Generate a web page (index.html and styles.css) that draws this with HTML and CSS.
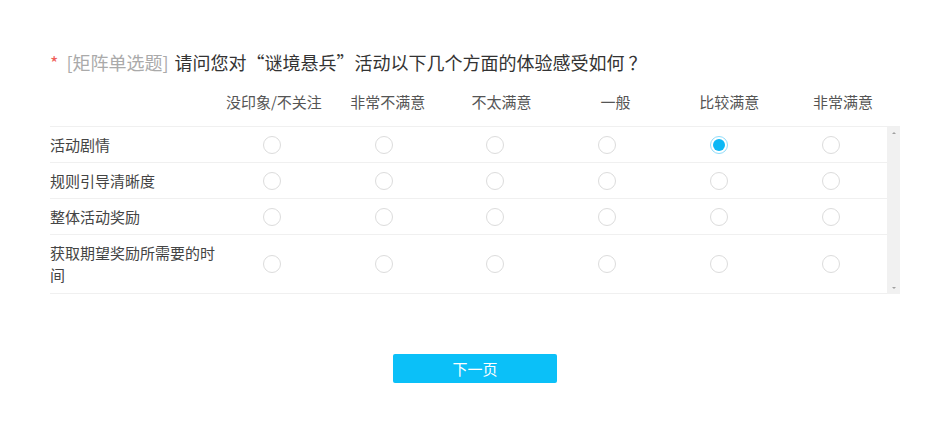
FILE: index.html
```html
<!DOCTYPE html>
<html lang="zh-CN">
<head>
<meta charset="utf-8">
<title>矩阵单选题</title>
<link rel="stylesheet" href="styles.css">
</head>
<body>
<div class="page">
  <div class="question">
    <div class="title">
      <span class="req">*</span>
      <span class="type">[矩阵单选题]</span>
      <span class="text">请问您对“谜境悬兵”活动以下几个方面的体验感受如何 ？</span>
    </div>
    <div class="matrix">
      <div class="head">
        <div class="label"></div>
        <div class="col">没印象/不关注</div>
        <div class="col">非常不满意</div>
        <div class="col">不太满意</div>
        <div class="col">一般</div>
        <div class="col">比较满意</div>
        <div class="col">非常满意</div>
      </div>
      <div class="body">
        <div class="rows">
          <div class="row">
            <div class="label">活动剧情</div>
            <div class="col"><span class="radio"></span></div>
            <div class="col"><span class="radio"></span></div>
            <div class="col"><span class="radio"></span></div>
            <div class="col"><span class="radio"></span></div>
            <div class="col"><span class="radio checked"></span></div>
            <div class="col"><span class="radio"></span></div>
          </div>
          <div class="row">
            <div class="label">规则引导清晰度</div>
            <div class="col"><span class="radio"></span></div>
            <div class="col"><span class="radio"></span></div>
            <div class="col"><span class="radio"></span></div>
            <div class="col"><span class="radio"></span></div>
            <div class="col"><span class="radio"></span></div>
            <div class="col"><span class="radio"></span></div>
          </div>
          <div class="row">
            <div class="label">整体活动奖励</div>
            <div class="col"><span class="radio"></span></div>
            <div class="col"><span class="radio"></span></div>
            <div class="col"><span class="radio"></span></div>
            <div class="col"><span class="radio"></span></div>
            <div class="col"><span class="radio"></span></div>
            <div class="col"><span class="radio"></span></div>
          </div>
          <div class="row">
            <div class="label">获取期望奖励所需要的时间</div>
            <div class="col"><span class="radio"></span></div>
            <div class="col"><span class="radio"></span></div>
            <div class="col"><span class="radio"></span></div>
            <div class="col"><span class="radio"></span></div>
            <div class="col"><span class="radio"></span></div>
            <div class="col"><span class="radio"></span></div>
          </div>
        </div>
        <div class="scrollbar">
          <span class="arrow up"></span>
          <span class="arrow down"></span>
        </div>
      </div>
    </div>
  </div>
  <div class="actions">
    <button class="next">下一页</button>
  </div>
</div>
</body>
</html>
```

FILE: styles.css
```css
html, body {
  margin: 0;
  padding: 0;
  background: #fff;
}
body {
  font-family: "Noto Sans CJK SC", "Noto Sans", "Liberation Sans", sans-serif;
  color: #333;
}
.page {
  width: 850px;
  padding: 49px 0 0 50px;
}
.title {
  font-size: 18px;
  line-height: 26px;
  height: 26px;
  display: flex;
  align-items: center;
  white-space: pre;
}
.req {
  color: #f0605a;
  margin-right: 8px;
}
.type {
  color: #aaa;
  margin-right: 6px;
}
.text {
  color: #333;
}
.matrix {
  margin-top: 16px;
}
.head {
  display: flex;
  font-size: 15px;
  line-height: 22px;
  color: #555;
  padding-bottom: 13px;
}
.head .col {
  flex: 1;
  text-align: center;
  white-space: nowrap;
}
.label {
  width: 166px;
  flex: none;
}
.head .label {
  width: 167px;
}
.body {
  display: flex;
  border-top: 1px solid #f0f0f0;
}
.rows {
  flex: 1;
}
.row {
  display: flex;
  align-items: center;
  border-bottom: 1px solid #f0f0f0;
  padding: 7px 0 6px;
  font-size: 15px;
  line-height: 22px;
  color: #444;
}
.row:last-child {
  padding-bottom: 7px;
}
.row .col {
  width: 111.8px;
  display: flex;
  justify-content: center;
  align-items: center;
}
.radio {
  width: 18px;
  height: 18px;
  box-sizing: border-box;
  border: 1px solid #dcdcdc;
  border-radius: 50%;
  display: block;
  position: relative;
}
.radio.checked {
  border-color: #8fdcfa;
  background: #fff;
}
.radio.checked::after {
  content: "";
  position: absolute;
  left: 2px;
  top: 2px;
  width: 12px;
  height: 12px;
  border-radius: 50%;
  background: #0ab7f5;
}
.scrollbar {
  width: 13px;
  flex: none;
  background: #f1f1f1;
  display: flex;
  flex-direction: column;
  justify-content: space-between;
  align-items: center;
  padding: 5px 0;
  box-sizing: border-box;
}
.arrow {
  width: 0;
  height: 0;
  border-left: 2px solid transparent;
  border-right: 2px solid transparent;
}
.arrow.up {
  border-bottom: 2px solid #a0a0a0;
}
.arrow.down {
  border-top: 2px solid #a0a0a0;
}
.actions {
  display: flex;
  justify-content: center;
  margin-top: 60px;
}
.next {
  width: 164px;
  height: 29px;
  border: none;
  border-radius: 2px;
  background: #0bc0f8;
  color: #fff;
  font-family: "Noto Sans CJK SC", "Noto Sans", sans-serif;
  font-size: 15px;
  line-height: 29px;
  padding: 0;
}
```
